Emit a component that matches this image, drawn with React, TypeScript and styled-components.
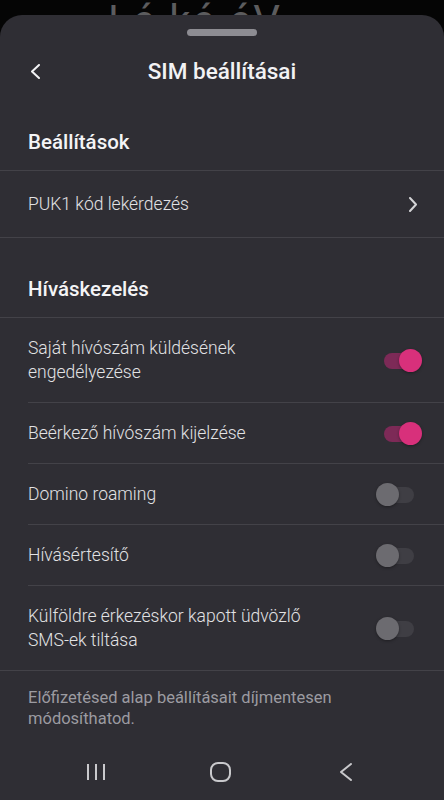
import * as React from 'react'
import styled, { createGlobalStyle } from 'styled-components'

const GlobalStyle = createGlobalStyle`
  html, body {
    margin: 0;
    padding: 0;
    background: #050505;
  }
  body {
    font-family: Roboto, "Noto Sans", "Liberation Sans", sans-serif;
    -webkit-font-smoothing: antialiased;
  }
  * {
    box-sizing: border-box;
  }
`

const Page = styled.div`
  display: flex;
  flex-direction: column;
  min-height: 100vh;
  background: #050505;
`

const Backdrop = styled.div`
  height: 15px;
  overflow: hidden;
  padding-left: 108px;
  color: #5c5c5e;
  font-size: 42px;
  line-height: 1;
  white-space: nowrap;
  letter-spacing: 2px;
`

const Sheet = styled.div`
  flex: 1;
  display: flex;
  flex-direction: column;
  background: #2f2e34;
  border-radius: 22px 22px 0 0;
  padding-top: 14px;
`

const Handle = styled.div`
  align-self: center;
  width: 70px;
  height: 7px;
  border-radius: 4px;
  background: #8d8c92;
`

const Header = styled.div`
  position: relative;
  height: 70px;
  display: flex;
  align-items: center;
  justify-content: center;
`

const BackButton = styled.button`
  position: absolute;
  left: 26px;
  top: 50%;
  transform: translateY(-50%);
  width: 18px;
  height: 22px;
  padding: 0;
  border: 0;
  background: none;
  display: flex;
  align-items: center;
  justify-content: center;
`

const Title = styled.h1`
  margin: 0;
  font-size: 22.5px;
  font-weight: 500;
  color: #f2f2f4;
`

const SectionTitle = styled.h2<{ $first?: boolean }>`
  margin: 0;
  padding: ${ p => (p.$first ? '22px' : '37px') } 28px 14px;
  font-size: 20.5px;
  line-height: 28px;
  font-weight: 500;
  color: #f4f4f6;
  border-bottom: 1px solid #434248;
`

const LinkRow = styled.div`
  display: flex;
  align-items: center;
  justify-content: space-between;
  padding: 21px 27px 21px 28px;
  border-bottom: 1px solid #434248;
`

const RowText = styled.span`
  font-size: 17.5px;
  line-height: 24px;
  font-weight: 300;
  color: #e2e2e4;
  max-width: 310px;
`

const ToggleList = styled.div`
  display: flex;
  flex-direction: column;
  border-bottom: 1px solid #434248;
`

const ToggleRow = styled.div`
  display: flex;
  align-items: center;
  justify-content: space-between;
  margin-left: 28px;
  padding: 18px 22px 18px 0;
  & + & {
    border-top: 1px solid #434248;
  }
`

const Switch = styled.span`
  position: relative;
  flex: none;
  width: 46px;
  height: 23px;
`

const Track = styled.span<{ $on: boolean }>`
  position: absolute;
  left: 8px;
  top: 4px;
  width: 30px;
  height: 16px;
  border-radius: 8px;
  background: ${ p => (p.$on ? '#7d2a57' : '#3f3e44') };
`

const Thumb = styled.span<{ $on: boolean }>`
  position: absolute;
  top: 0;
  left: ${ p => (p.$on ? '23px' : '0') };
  width: 23px;
  height: 23px;
  border-radius: 50%;
  background: ${ p => (p.$on ? '#d8307b' : '#6c6b70') };
  box-shadow: 0 1px 3px rgba(0, 0, 0, 0.35);
`

const Note = styled.p`
  margin: 0;
  padding: 16px 28px 0;
  font-size: 16.5px;
  line-height: 21px;
  font-weight: 400;
  color: #9c9ba1;
`

const NavBar = styled.nav`
  margin-top: auto;
  height: 56px;
  display: flex;
  align-items: center;
  justify-content: space-around;
  padding: 0 36px 0 34px;
`

const NavButton = styled.span`
  display: flex;
  align-items: center;
  justify-content: center;
  width: 40px;
  height: 30px;
`

interface IToggle {
  label: React.ReactNode;
  on: boolean;
}

const toggles: IToggle[] = [
  { label: <>Saját hívószám küldésének<br />engedélyezése</>, on: true },
  { label: 'Beérkező hívószám kijelzése', on: true },
  { label: 'Domino roaming', on: false },
  { label: 'Hívásértesítő', on: false },
  { label: <>Külföldre érkezéskor kapott üdvözlő<br />SMS-ek tiltása</>, on: false },
]

const Chevron: React.FC<{ dir: 'left' | 'right'; color: string; w?: number; h?: number }> = ({ dir, color, w = 8, h = 14 }) => (
  <svg width={ w + 2 } height={ h + 2 } viewBox={ `-1 -1 ${ w + 2 } ${ h + 2 }` } fill="none">
    <path
      d={ dir === 'left' ? `M${ w } 0 L0 ${ h / 2 } L${ w } ${ h }` : `M0 0 L${ w } ${ h / 2 } L0 ${ h }` }
      stroke={ color }
      strokeWidth={ 2 }
      strokeLinecap="round"
      strokeLinejoin="round"
    />
  </svg>
)

const App: React.FC = () => (
  <Page>
    <GlobalStyle />
    <Backdrop aria-hidden>Lé ké éV</Backdrop>
    <Sheet>
      <Handle />
      <Header>
        <BackButton aria-label="Vissza">
          <Chevron dir="left" color="#f2f2f4" w={ 7 } h={ 13 } />
        </BackButton>
        <Title>SIM beállításai</Title>
      </Header>

      <SectionTitle $first>Beállítások</SectionTitle>
      <LinkRow>
        <RowText>PUK1 kód lekérdezés</RowText>
        <Chevron dir="right" color="#d4d4d6" w={ 6 } h={ 13 } />
      </LinkRow>

      <SectionTitle>Híváskezelés</SectionTitle>
      <ToggleList>
        { toggles.map((t, i) => (
          <ToggleRow key={ i }>
            <RowText>{ t.label }</RowText>
            <Switch>
              <Track $on={ t.on } />
              <Thumb $on={ t.on } />
            </Switch>
          </ToggleRow>
        )) }
      </ToggleList>

      <Note>Előfizetésed alap beállításait díjmentesen módosíthatod.</Note>

      <NavBar>
        <NavButton>
          <svg width="20" height="18" viewBox="0 0 20 18">
            <path d="M2 1v16M10 1v16M18 1v16" stroke="#c9c9cc" strokeWidth="2" />
          </svg>
        </NavButton>
        <NavButton>
          <svg width="21" height="20" viewBox="0 0 21 20" fill="none">
            <rect x="1" y="1" width="19" height="18" rx="7" stroke="#c9c9cc" strokeWidth="2" />
          </svg>
        </NavButton>
        <NavButton>
          <Chevron dir="left" color="#c9c9cc" w={ 10 } h={ 16 } />
        </NavButton>
      </NavBar>
    </Sheet>
  </Page>
)

export default App
